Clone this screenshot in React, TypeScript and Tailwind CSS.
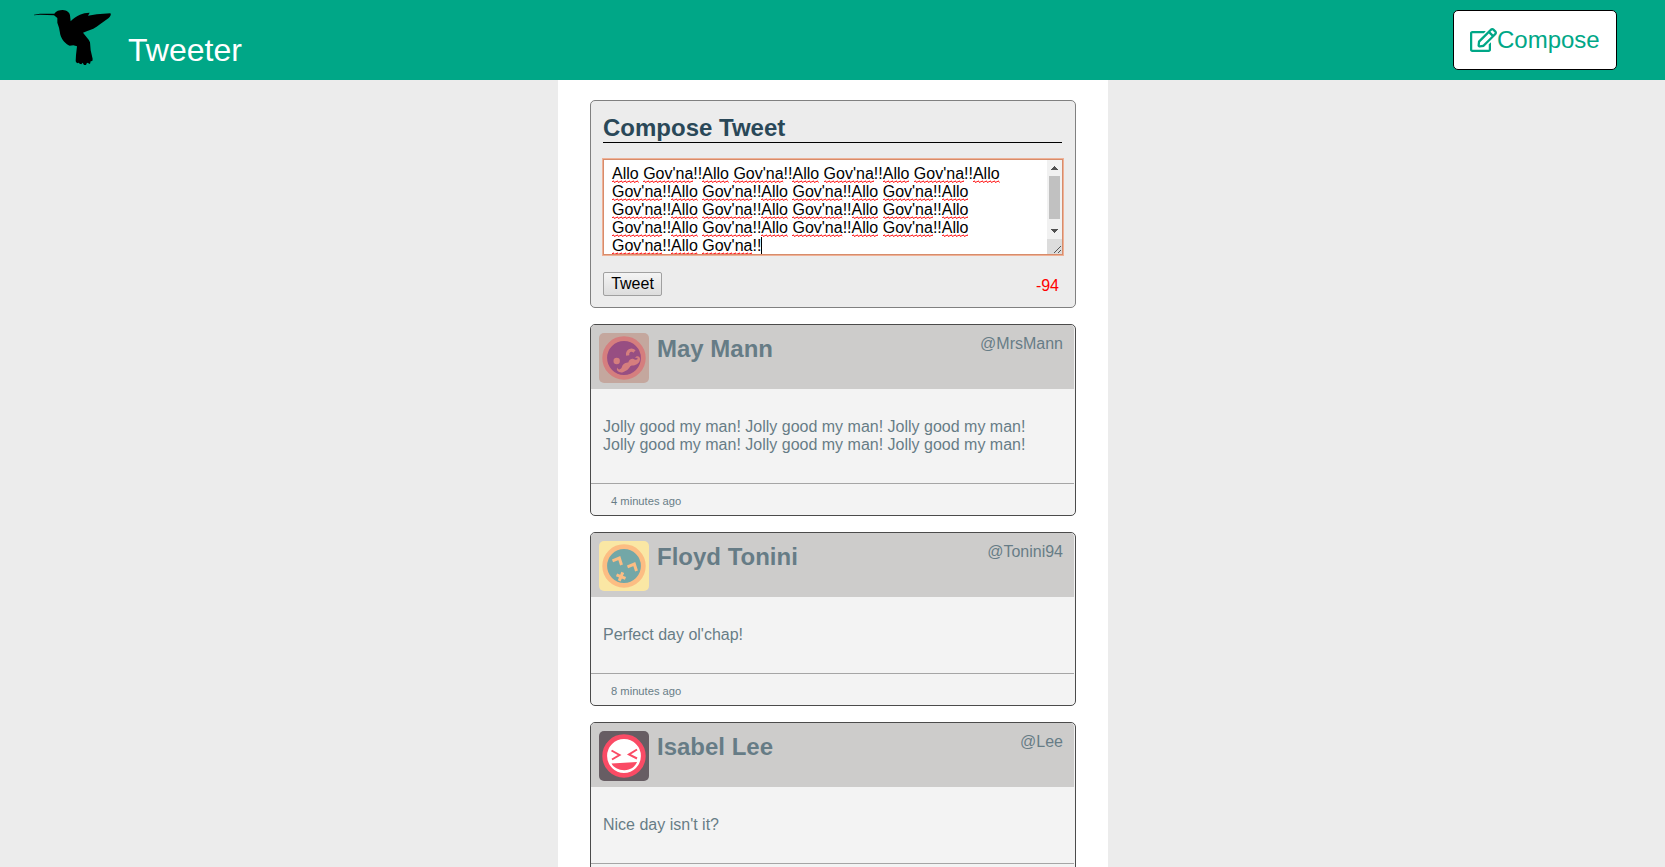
import { FaRegEdit } from "react-icons/fa";
import type { ReactNode } from "react";

type Tweet = {
  name: string;
  handle: string;
  lines: string[];
  age?: string;
  avatar: ReactNode;
};

function Avatar({ bg, ring, face, children }: { bg: string; ring: string; face: string; children: ReactNode }) {
  return (
    <svg viewBox="0 0 50 50" className="h-[50px] w-[50px] shrink-0 rounded-[5px]">
      <rect width="50" height="50" fill={bg} />
      <circle cx="25" cy="25" r="19.3" fill={face} stroke={ring} strokeWidth="4.8" />
      {children}
    </svg>
  );
}

const tweets: Tweet[] = [
  {
    name: "May Mann",
    handle: "@MrsMann",
    lines: [
      "Jolly good my man! Jolly good my man! Jolly good my man!",
      "Jolly good my man! Jolly good my man! Jolly good my man!",
    ],
    age: "4 minutes ago",
    avatar: (
      <Avatar bg="#ac8376" ring="#c44848" face="#6c044e">
        <circle cx="17.7" cy="28" r="3.2" fill="#c44848" />
        <path d="M28.700 22.500C27.800 18 32.300 15.500 35.500 18.500" fill="none" stroke="#c44848" strokeWidth="3.2" />
        <path
          d="M18.300 34.500C19 37.500 22 36.500 22.700 34.500C23.500 31.500 25.500 29.300 29.300 29.500C29.800 26.500 33.500 24.800 35.500 26.500C37.500 27.300 39.300 26.500 38.300 24.800L36.300 25C36.500 22.700 40.500 22.300 41 25.500C41.300 28.500 39 31.500 35.500 32.200C33.500 32.600 32.300 32.300 31.300 33.300C29.500 36.500 27.500 37.800 24 39.200C20.500 40.300 16.500 37.800 18.300 34.500Z"
          fill="#c44848"
        />
      </Avatar>
    ),
  },
  {
    name: "Floyd Tonini",
    handle: "@Tonini94",
    lines: ["Perfect day ol'chap!"],
    age: "8 minutes ago",
    avatar: (
      <Avatar bg="#f8dd7e" ring="#fba24f" face="#388383">
        <path
          d="M13.500 19.800L20.300 17L22.500 24M28.500 25.800L35.300 23L37.500 30"
          fill="none"
          stroke="#fba24f"
          strokeWidth="3"
        />
        <path d="M17.500 33.800L26.500 37.300M23.800 31.300L20.200 39.800" stroke="#fba24f" strokeWidth="3" />
      </Avatar>
    ),
  },
  {
    name: "Isabel Lee",
    handle: "@Lee",
    lines: ["Nice day isn't it?"],
    avatar: (
      <Avatar bg="#271a22" ring="#f90024" face="#ffffff">
        <path d="M12.500 19.500L20.500 24L13 28.500M38 18.500L30 23.500L38 27.500" fill="none" stroke="#f90024" strokeWidth="2" />
        <path d="M12.500 32.500L38 31C36 36 31.500 39 25.500 39.200C19.500 39.300 14.500 36.500 12.500 32.500Z" fill="#f90024" />
      </Avatar>
    ),
  },
];

function Hummingbird() {
  return (
    <svg viewBox="42 30 231 168" className="h-[56px] w-[77px]" aria-hidden="true">
      <path d="M42 44L60 41.500L103 41C108 33 118 30 128 30C141 31 149 37 150 46L152 64C160 54 170 49 180 44C188 40 198 38 209 38L204 47L230 43L271 40C275 44 270 51 262 57L240 73C226 84 214 90 200 94L189 98L206 119L210 127L212 151L218 177L217 183L212 184L210 192L205 190L201 188L198 195L192 195L188 188L184 193L179 191L176 188L171 190L167 184L168 165L171 139L160 136L149 137C137 131 125 119 121 104L117 83L112 68L112 54L102 46L60 44.500L42 46Z" />
    </svg>
  );
}

function Misspelt({ children }: { children: string }) {
  return (
    <span className="relative inline-block h-[18px]">
      {children}
      <svg className="absolute top-[15px] left-0 h-[3px] w-full" aria-hidden="true">
        <rect width="100%" height="3" fill="url(#squiggle)" />
      </svg>
    </span>
  );
}

function DraftLine({ text }: { text: string }) {
  return (
    <>
      {text.split(/(Allo|Gov'na)/).map((part, i) =>
        i % 2 === 1 ? <Misspelt key={i}>{part}</Misspelt> : <span key={i}>{part}</span>,
      )}
    </>
  );
}

const draft = [
  "Allo Gov'na!!Allo Gov'na!!Allo Gov'na!!Allo Gov'na!!Allo",
  "Gov'na!!Allo Gov'na!!Allo Gov'na!!Allo Gov'na!!Allo",
  "Gov'na!!Allo Gov'na!!Allo Gov'na!!Allo Gov'na!!Allo",
  "Gov'na!!Allo Gov'na!!Allo Gov'na!!Allo Gov'na!!Allo",
  "Gov'na!!Allo Gov'na!!",
];

function ScrollTrack() {
  return (
    <div className="flex w-[15px] shrink-0 flex-col bg-[#f1f1f1]">
      <svg viewBox="0 0 15 16" className="h-4 w-[15px]" shapeRendering="crispEdges">
        <path d="M4 10L7.500 6L11 10Z" fill="#505050" />
      </svg>
      <div className="mx-[2px] h-[43px] bg-[#c1c1c1]" />
      <svg viewBox="0 0 15 20" className="h-5 w-[15px]" shapeRendering="crispEdges">
        <path d="M4 10L7.500 14L11 10Z" fill="#505050" />
      </svg>
      <svg viewBox="0 0 15 15" className="h-[15px] w-[15px] bg-[#dcdcdc]">
        <path d="M7 14L14 7M11 14L14 11" stroke="#555" strokeWidth="1" />
      </svg>
    </div>
  );
}

function Composer() {
  return (
    <section className="h-[208px] rounded-[5px] border border-[#808080] bg-[#ececec] px-3 pt-[11px]">
      <h2 className="mr-px h-[31px] border-b border-black pt-[2px] text-2xl leading-[28px] font-bold text-[#2a4858]">
        Compose Tweet
      </h2>
      <svg className="absolute h-0 w-0" aria-hidden="true">
        <defs>
          <pattern id="squiggle" width="4" height="3" patternUnits="userSpaceOnUse">
            <path d="M-1 3L1 0.800L3 2.600L5 0.300" fill="none" stroke="#ff0000" strokeWidth="1" />
          </pattern>
        </defs>
      </svg>
      <div className="mt-4 flex h-24 overflow-hidden border border-[#d78c6b] bg-white outline-1 outline-[#efb196]">
        <div className="grow overflow-hidden pt-[5px] pl-2 text-base leading-[18px] whitespace-nowrap text-black">
          {draft.map((line, i) => (
            <div key={i} className="flex h-[18px]">
              <span>
                <DraftLine text={line} />
              </span>
              {i === draft.length - 1 && <span className="h-[18px] w-px bg-black" />}
            </div>
          ))}
        </div>
        <ScrollTrack />
      </div>
      <div className="mt-[17px] flex justify-between">
        <button className="h-6 w-[59px] rounded-[2px] border border-[#a0a0a0] bg-linear-to-b from-[#f4f4f4] to-[#dddddd] text-base leading-[20px] text-black">
          Tweet
        </button>
        <span className="pt-[5px] pr-1 text-base leading-[18px] text-[#ff0000]">-94</span>
      </div>
    </section>
  );
}

function TweetCard({ tweet }: { tweet: Tweet }) {
  return (
    <article className="rounded-[5px] border border-black bg-[#eeeeee] text-[#264653] opacity-70">
      <header className="mr-px flex h-16 rounded-t-[4px] bg-[#b9b7b6] pt-2 pr-[11px] pl-2">
        {tweet.avatar}
        <h3 className="ml-2 pt-[2px] text-2xl leading-[28px] font-bold">{tweet.name}</h3>
        <span className="ml-auto pt-[2px] text-base leading-[18px]">{tweet.handle}</span>
      </header>
      <div className="px-3 py-[29px] text-base leading-[18px] whitespace-nowrap">
        {tweet.lines.map((line, i) => (
          <p key={i}>{line}</p>
        ))}
      </div>
      <footer className="mr-px h-8 border-t border-[#808080] pt-[11px] pl-5 text-[11.2px] leading-[13px]">{tweet.age}</footer>
    </article>
  );
}

export default function App() {
  return (
    <div className="flex h-[867px] flex-col overflow-hidden bg-[#ececec] font-['Liberation_Sans',Arial,sans-serif]">
      <nav className="flex h-20 shrink-0 items-start bg-[#00a787] pt-[10px] pr-12 pl-[34px]">
        <Hummingbird />
        <h1 className="mt-[22px] ml-[17px] text-[32px] leading-[36px] text-white">Tweeter</h1>
        <button className="ml-auto flex h-[60px] w-[164px] items-center rounded-[5px] border border-black bg-white pl-4 text-2xl text-[#00a787]">
          <FaRegEdit className="h-6 w-[27px] shrink-0" />
          <span>Compose</span>
        </button>
      </nav>
      <main className="ml-[558px] flex w-[550px] grow flex-col gap-4 bg-white px-8 pt-5">
        <Composer />
        {tweets.map((t) => (
          <TweetCard key={t.handle} tweet={t} />
        ))}
      </main>
    </div>
  );
}
